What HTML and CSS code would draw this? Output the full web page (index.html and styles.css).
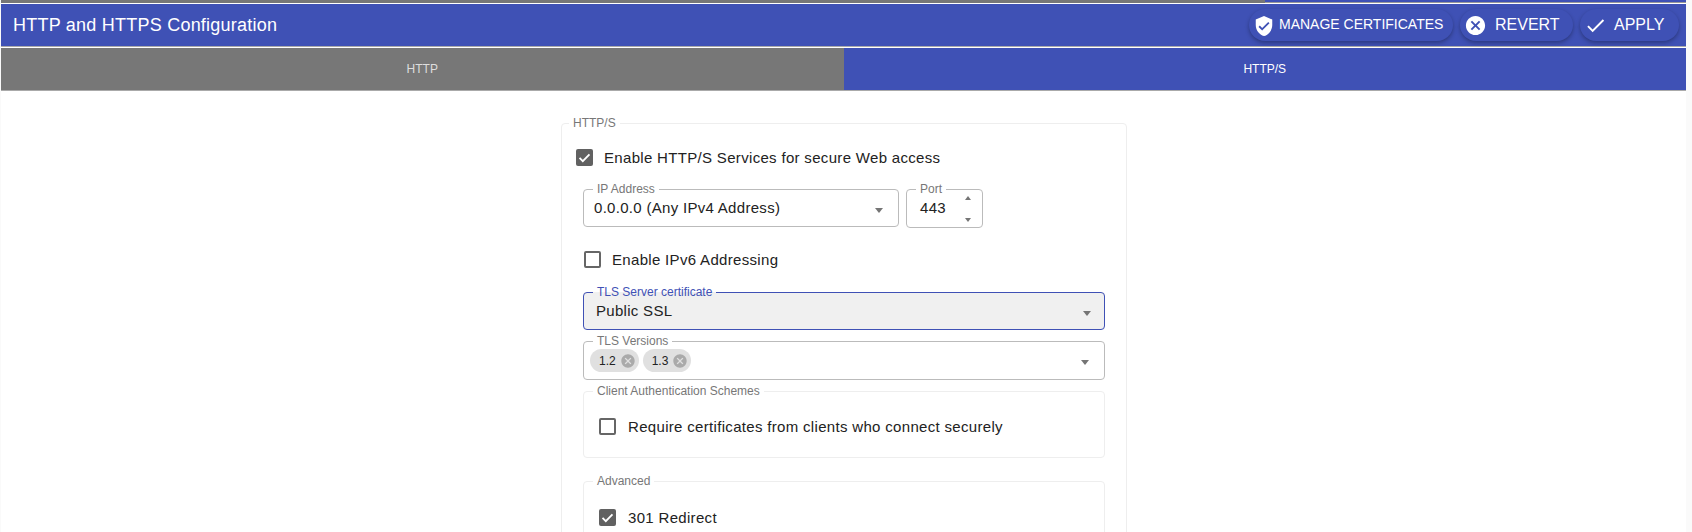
FILE: index.html
```html
<!DOCTYPE html>
<html>
<head>
    <title>HTTP and HTTPS Configuration</title>
    <link rel="stylesheet" href="styles.css">
</head>
<body>
    <div class="page">
        <div class="strip"><div class="strip-left"></div><div class="strip-right"></div></div>
        <header class="toolbar">
            <div class="title">HTTP and HTTPS Configuration</div>
            <div class="actions">
                <button class="btn btn-manage">
                    <svg class="icon-shield" viewBox="0 0 24 24"><path fill="#fff" d="M12 1 3 5v6c0 5.55 3.84 10.74 9 12 5.16-1.26 9-6.45 9-12V5l-9-4zm-2 16-4-4 1.41-1.41L10 14.17l6.59-6.59L18 9l-8 8z"/></svg>
                    <span>MANAGE CERTIFICATES</span>
                </button>
                <button class="btn btn-revert">
                    <svg class="icon-revert" viewBox="0 0 24 24"><path fill="#fff" d="M12 2C6.47 2 2 6.47 2 12s4.47 10 10 10 10-4.47 10-10S17.53 2 12 2zm5 13.59L15.59 17 12 13.41 8.41 17 7 15.59 10.59 12 7 8.41 8.41 7 12 10.59 15.59 7 17 8.41 13.41 12 17 15.59z"/></svg>
                    <span>REVERT</span>
                </button>
                <button class="btn btn-apply">
                    <svg class="icon-apply" viewBox="0 0 24 24"><path fill="#fff" d="M9 16.17 4.83 12l-1.42 1.41L9 19 21 7l-1.41-1.41z"/></svg>
                    <span>APPLY</span>
                </button>
            </div>
        </header>
        <div class="tabs">
            <div class="tab tab-off">HTTP</div>
            <div class="tab tab-on">HTTP/S</div>
        </div>
        <main class="content">
            <fieldset class="box box-main">
                <legend>HTTP/S</legend>
                <label class="check check-top">
                    <span class="checkbox checked"><svg viewBox="0 0 24 24"><path fill="none" stroke="#fff" stroke-width="2.6" d="M5 12.5l4.6 4.6L19 7.5"/></svg></span>
                    Enable HTTP/S Services for secure Web access
                </label>
                <div class="row-ip">
                    <fieldset class="field field-ip">
                        <legend>IP Address</legend>
                        <span class="value">0.0.0.0 (Any IPv4 Address)</span>
                        <span class="arrow"></span>
                    </fieldset>
                    <fieldset class="field field-port">
                        <legend>Port</legend>
                        <span class="value">443</span>
                        <span class="spinner"><i class="up"></i><i class="down"></i></span>
                    </fieldset>
                </div>
                <label class="check check-ipv6">
                    <span class="checkbox"></span>
                    Enable IPv6 Addressing
                </label>
                <fieldset class="field field-tls focused">
                    <legend>TLS Server certificate</legend>
                    <span class="value">Public SSL</span>
                    <span class="arrow"></span>
                </fieldset>
                <fieldset class="field field-versions">
                    <legend>TLS Versions</legend>
                    <div class="chips">
                        <span class="chip">1.2 <svg viewBox="0 0 24 24"><path fill="#aaa" d="M12 2C6.47 2 2 6.47 2 12s4.47 10 10 10 10-4.47 10-10S17.53 2 12 2zm5 13.59L15.59 17 12 13.41 8.41 17 7 15.59 10.59 12 7 8.41 8.41 7 12 10.59 15.59 7 17 8.41 13.41 12 17 15.59z"/></svg></span>
                        <span class="chip">1.3 <svg viewBox="0 0 24 24"><path fill="#aaa" d="M12 2C6.47 2 2 6.47 2 12s4.47 10 10 10 10-4.47 10-10S17.53 2 12 2zm5 13.59L15.59 17 12 13.41 8.41 17 7 15.59 10.59 12 7 8.41 8.41 7 12 10.59 15.59 7 17 8.41 13.41 12 17 15.59z"/></svg></span>
                    </div>
                    <span class="arrow"></span>
                </fieldset>
                <fieldset class="box box-client">
                    <legend>Client Authentication Schemes</legend>
                    <label class="check">
                        <span class="checkbox"></span>
                        Require certificates from clients who connect securely
                    </label>
                </fieldset>
                <fieldset class="box box-advanced">
                    <legend>Advanced</legend>
                    <label class="check">
                        <span class="checkbox checked"><svg viewBox="0 0 24 24"><path fill="none" stroke="#fff" stroke-width="2.6" d="M5 12.5l4.6 4.6L19 7.5"/></svg></span>
                        301 Redirect
                    </label>
                </fieldset>
            </fieldset>
        </main>
    </div>
</body>
</html>
```

FILE: styles.css
```css
html, body {
    margin: 0;
    height: 532px;
    overflow: hidden;
    background: #fafafa;
}

body {
    font-family: "Liberation Sans", Arial, sans-serif;
    color: #222;
}

.page {
    margin: 0 6px 0 1px;
    height: 532px;
    background: #fff;
    overflow: hidden;
}

.strip {
    display: flex;
    height: 3px;
    border-bottom: 1px solid #fff;
}

.strip-left {
    width: 1264px;
    background: #777;
}

.strip-right {
    flex: 1;
    background: #3f51b5;
    border-bottom: 1px solid #999;
}

.toolbar {
    display: flex;
    align-items: center;
    justify-content: space-between;
    height: 42px;
    background: #3f51b5;
    border-bottom: 1px solid #aaa;
    color: #fff;
}

.title {
    margin-left: 12px;
    font-size: 18px;
    letter-spacing: 0.23px;
}

.actions {
    display: flex;
    gap: 7px;
    margin-right: 7px;
}

.btn {
    display: flex;
    align-items: center;
    height: 32px;
    padding: 0;
    border: none;
    border-radius: 16px;
    background: #3f51b5;
    color: #fff;
    font-family: "Liberation Sans", Arial, sans-serif;
    font-size: 16px;
    box-shadow: 0 2px 4px rgba(0, 0, 0, 0.3);
}

.btn svg {
    display: block;
}

.btn-manage {
    width: 204px;
    font-size: 14px;
}

.btn-manage span {
    margin-top: -2px;
}

.btn-revert {
    width: 113px;
}

.btn-apply {
    width: 99px;
}

.icon-shield {
    width: 22px;
    height: 22px;
    margin: 2px 4px 0 4px;
}

.icon-revert {
    width: 23px;
    height: 23px;
    margin: 0 8px 0 4px;
}

.icon-apply {
    width: 23px;
    height: 23px;
    margin: 0 7px 0 4px;
}

.tabs {
    display: flex;
    height: 42px;
    margin-top: 1px;
    border-bottom: 1px solid #aaa;
}

.tab {
    flex: 1;
    display: flex;
    align-items: center;
    justify-content: center;
    font-size: 12px;
    color: #ddd;
}

.tab-off {
    background: #777;
}

.tab-on {
    background: #3f51b5;
    color: #fff;
}

.content {
    width: 566px;
    margin-left: 560px;
    padding-top: 25px;
}

fieldset {
    margin: 0;
    padding: 0;
    min-width: 0;
    box-sizing: border-box;
}

legend {
    margin-left: 9px;
    padding: 0 4px;
    font-size: 12px;
    line-height: 14px;
    color: #777;
}

.box {
    border: 1px solid #eee;
    border-radius: 4px;
}

.box-main {
    height: 600px;
    padding: 0 21px;
}

.box-main > legend {
    margin-left: -14px;
}

.check {
    display: flex;
    align-items: center;
    gap: 12px;
    height: 18px;
    font-size: 15px;
    letter-spacing: 0.32px;
}

.check-top {
    margin: 18px 0 0 -7px;
    gap: 11px;
}

.check-ipv6 {
    margin-top: 22px;
    margin-left: 1px;
    gap: 11px;
}

.checkbox {
    box-sizing: border-box;
    flex: none;
    width: 17px;
    height: 17px;
    border: 2px solid #666;
    border-radius: 2px;
    background: #fff;
}

.checked {
    border: none;
    background: #616161;
}

.checkbox svg {
    display: block;
    width: 17px;
    height: 17px;
}

.row-ip {
    display: flex;
    gap: 7px;
    margin-top: 16px;
}

.field {
    position: relative;
    border: 1px solid #bbb;
    border-radius: 4px;
    font-size: 15px;
    letter-spacing: 0.3px;
}

.field legend {
    letter-spacing: 0;
}

.field-ip {
    width: 316px;
    height: 45px;
}

.field-ip .value {
    margin-left: 10px;
}

.field-port {
    width: 77px;
    height: 46px;
}

.field-port .value {
    margin-left: 13px;
}

.value {
    display: block;
    line-height: 20px;
    margin-top: 2px;
}

.arrow {
    position: absolute;
    right: 15px;
    top: 12px;
    border-left: 4.5px solid transparent;
    border-right: 4.5px solid transparent;
    border-top: 5px solid #757575;
}

.spinner i {
    position: absolute;
    right: 11px;
    border-left: 3.5px solid transparent;
    border-right: 3.5px solid transparent;
}

.spinner .up {
    top: 0;
    border-bottom: 4px solid #757575;
}

.spinner .down {
    top: 22px;
    border-top: 4px solid #757575;
}

.field-tls {
    width: 522px;
    height: 45px;
    margin-top: 17px;
    background: #f0f0f0;
}

.field-tls .value {
    margin-left: 12px;
}

.field-tls .arrow {
    right: 13px;
}

.focused {
    border-color: #3f51b5;
}

.focused legend {
    color: #3f51b5;
}

.field-versions {
    width: 522px;
    height: 46px;
    margin-top: 4px;
}

.chips {
    display: flex;
    gap: 4px;
    margin: 1px 0 0 6px;
}

.chip {
    display: flex;
    align-items: center;
    gap: 4px;
    height: 23px;
    padding: 0 3px 0 9px;
    border-radius: 12px;
    background: #e0e0e0;
    font-size: 12px;
    letter-spacing: 0;
}

.chip svg {
    width: 16px;
    height: 16px;
}

.box-client {
    width: 522px;
    height: 74px;
    margin-top: 4px;
    padding: 19px 0 0 15px;
}

.box-client legend,
.box-advanced legend {
    margin-left: -6px;
}

.box-advanced {
    width: 522px;
    height: 120px;
    margin-top: 16px;
    padding: 20px 0 0 15px;
}
```
